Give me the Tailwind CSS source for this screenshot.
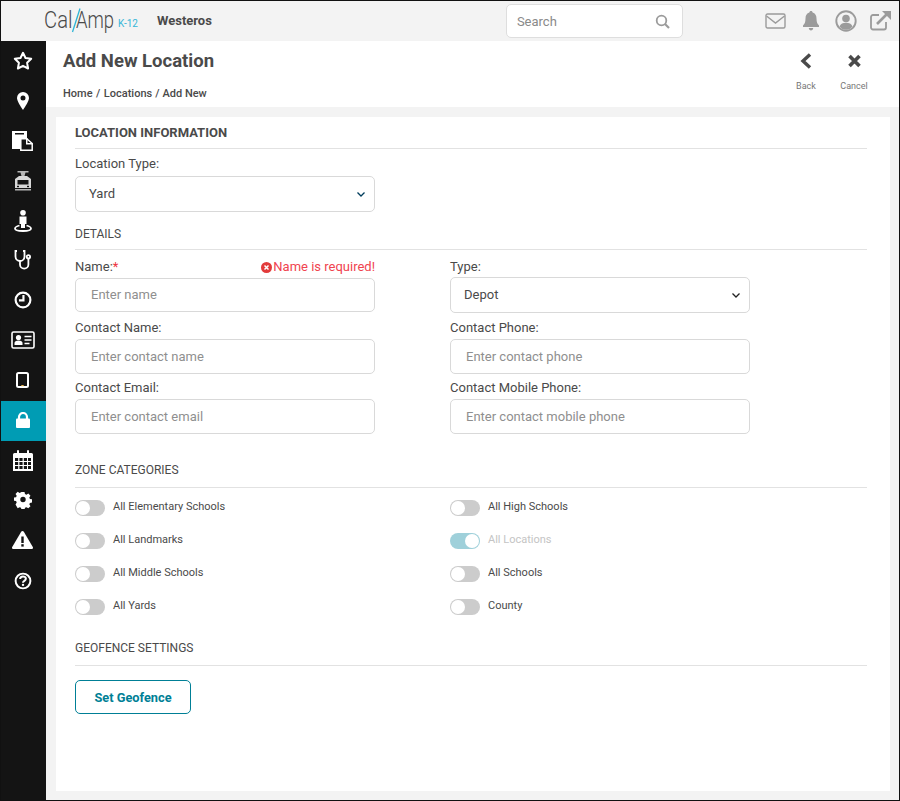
<!DOCTYPE html>
<html lang="en">
<head>
    <meta charset="UTF-8">
    <title>Add New Location</title>
    <script src="https://cdn.jsdelivr.net/npm/@tailwindcss/browser@4"></script>
</head>
<body class="bg-white font-['Roboto',sans-serif] text-[#4a4a4a]">
<div class="w-[900px] h-[801px] border border-[#111] flex flex-col overflow-hidden">

    <!-- top bar -->
    <header class="h-[40px] shrink-0 bg-[#f3f3f3] flex items-center">
        <div class="relative w-[156px] h-[40px] shrink-0">
            <span class="absolute left-[43px] top-[4px] text-[23px] leading-[32px] font-light text-[#4a4a4a] origin-left scale-x-[0.88]">Cal</span>
            <svg class="absolute left-[69px] top-[6px]" width="12" height="26" viewBox="0 0 12 26"><path d="M10 1.500 2.500 25" stroke="#2db4d6" stroke-width="1.300" fill="none"/></svg>
            <span class="absolute left-[75px] top-[4px] text-[23px] leading-[32px] font-light text-[#4a4a4a] origin-left scale-x-[0.8]">Amp</span>
            <span class="absolute left-[117px] top-[17px] text-[10px] leading-[12px] text-[#35b6d8]">K-12</span>
        </div>
        <span class="text-[13px] font-bold text-[#4a4a4a]">Westeros</span>
        <div class="ml-[294px] w-[177px] h-[34px] bg-white border border-[#dedede] rounded-[5px] flex items-center justify-between pl-[10px] pr-[12px] pt-px shrink-0">
            <span class="text-[13px] text-[#8a8a8a]">Search</span>
            <svg width="15" height="15" viewBox="0 0 15 15" fill="none" stroke="#9b9b9b" stroke-width="1.800"><circle cx="6.500" cy="6.500" r="4.800"/><path d="M10 10l4 4" stroke-width="2.200"/></svg>
        </div>
        <div class="ml-[82px] flex items-center text-[#9b9b9b]">
            <svg width="21" height="16" viewBox="0 0 21 16" fill="none" stroke="#9b9b9b" stroke-width="1.400"><rect x="1" y="1" width="19" height="14" rx="1.500"/><path d="M1.500 3l9 7 9-7"/></svg>
            <svg class="ml-[15px]" width="20" height="20" viewBox="0 0 20 20" fill="#9b9b9b"><path d="M10 0c1 0 1.600.7 1.600 1.600C14.300 2.300 15.500 4.600 15.500 7.500c0 4 1 5.500 2.500 7v1.500H2v-1.500c1.500-1.500 2.500-3 2.500-7 0-2.900 1.200-5.200 3.900-5.900C8.400.7 9 0 10 0zM7.800 17h4.400c0 1.500-1 2.500-2.200 2.500S7.800 18.500 7.800 17z"/></svg>
            <svg class="ml-[14px]" width="22" height="22" viewBox="0 0 22 22"><circle cx="11" cy="11" r="9.700" fill="none" stroke="#9b9b9b" stroke-width="1.900"/><circle cx="11" cy="8.500" r="3.800" fill="#9b9b9b"/><path d="M4.500 16.500c1-3 3.500-3.800 6.500-3.800s5.500.8 6.500 3.800c-1.500 2-3.800 3.300-6.500 3.300s-5-1.300-6.500-3.300z" fill="#9b9b9b"/></svg>
            <svg class="ml-[13px]" width="21" height="20" viewBox="0 0 21 20" fill="none"><path d="M16 11v5.500a2 2 0 0 1-2 2H3a2 2 0 0 1-2-2V6a2 2 0 0 1 2-2h6" stroke="#9b9b9b" stroke-width="1.800"/><path d="M7 13 17 3" stroke="#9b9b9b" stroke-width="2.600"/><path d="M12 0h9v9z" fill="#9b9b9b"/></svg>
        </div>
    </header>

    <div class="flex flex-1 min-h-0">
        <!-- sidebar -->
        <nav class="w-[45px] shrink-0 bg-[#141414] flex flex-col">
            <a class="h-[40px] pb-[2px] pr-[2px] flex items-center justify-center"><svg width="20" height="19" viewBox="0 0 20 19" fill="none" stroke="#fff" stroke-width="2" stroke-linejoin="round"><path d="M10 1.800l2.500 5.200 5.700.8-4.100 4 1 5.700-5.100-2.700-5.100 2.700 1-5.700-4.100-4 5.700-.8z"/></svg></a>
            <a class="h-[40px] pr-[2px] flex items-center justify-center"><svg width="12" height="18" viewBox="0 0 12 18"><path fill="#fff" fill-rule="evenodd" d="M6 0a6 6 0 0 1 6 6c0 2.500-3.500 8.500-6 12C3.500 14.500 0 8.500 0 6a6 6 0 0 1 6-6zm0 3.500a2.500 2.500 0 1 0 0 5 2.500 2.500 0 0 0 0-5z"/></svg></a>
            <a class="h-[40px] pr-[2px] flex items-center justify-center"><svg width="21" height="20" viewBox="0 0 21 20"><path fill="#fff" d="M0 0h15v18H0z"/><rect x="3" y="2" width="9" height="1.500" fill="#141414"/><path fill="#141414" stroke="#fff" stroke-width="1.500" d="M8.800 7.800h6l5.400 4.700v6.700H8.800z"/><path fill="#fff" d="M14 7h1.500v5h5v1.500H14z"/></svg></a>
            <a class="h-[40px] pr-[2px] flex items-center justify-center"><svg width="18" height="20" viewBox="0 0 18 20"><path fill="#b5b5b5" d="M3.500 0h11v1.500h-3L10.500 5h-3l-1-3.500h-3z"/><path fill="#d8d8d8" d="M5 5h8l4 3v9H1V8z"/><rect x="3.500" y="9" width="11" height="4.500" fill="#141414"/><rect x="1" y="18" width="16" height="1.500" fill="#b5b5b5"/><rect x="3" y="14.800" width="2" height="1.400" fill="#141414"/><rect x="13" y="14.800" width="2" height="1.400" fill="#141414"/></svg></a>
            <a class="h-[40px] pr-[2px] flex items-center justify-center"><svg width="18" height="22" viewBox="0 0 18 22"><circle cx="9" cy="2.800" r="2.800" fill="#fff"/><path fill="#fff" d="M5.500 6.500h7v7.500H11V18H7v-4H5.500z"/><path fill="none" stroke="#fff" stroke-width="1.800" d="M5.500 15.500C2.800 16.200 1 17.300 1 18.500 1 20 4.600 21 9 21s8-1 8-2.500c0-1.200-1.800-2.300-4.500-3"/></svg></a>
            <a class="h-[40px] pb-[2px] pr-[2px] flex items-center justify-center"><svg width="17" height="20" viewBox="0 0 17 20" fill="none" stroke="#fff" stroke-width="1.800"><path d="M3 1H1.500v5.500a4.500 4.500 0 0 0 9 0V1H9"/><path d="M6 11v3.500a4.200 4.200 0 0 0 8.400 0V9"/><circle cx="14.400" cy="6.800" r="1.700"/></svg></a>
            <a class="h-[40px] pb-[2px] pr-[2px] flex items-center justify-center"><svg width="18" height="18" viewBox="0 0 20 20" fill="none" stroke="#fff"><circle cx="10" cy="10" r="8.200" stroke-width="2.400"/><path d="M10.500 4.500v6H5.500" stroke-width="2.400"/></svg></a>
            <a class="h-[40px] pb-[2px] pr-[1px] flex items-center justify-center"><svg width="24" height="18" viewBox="0 0 24 18"><rect x="1" y="1" width="22" height="16" rx="1.500" fill="#141414" stroke="#fff" stroke-width="1.600"/><circle cx="7.500" cy="6.500" r="2.600" fill="#fff"/><path fill="#fff" d="M3.500 14v-2c0-1.500 1.500-2.500 4-2.500s4 1 4 2.500v2z"/><path stroke="#fff" stroke-width="1.300" d="M13.500 5.500h7M13.500 9h7M13.500 12.500h5"/></svg></a>
            <a class="h-[40px] pb-[2px] pr-[2px] flex items-center justify-center"><svg width="13" height="16" viewBox="0 0 13 16"><rect x="1" y="1" width="11" height="14" rx="1.500" fill="#141414" stroke="#fff" stroke-width="2"/><rect x="5.300" y="13" width="2.400" height="1.200" fill="#e9b44c"/></svg></a>
            <a class="h-[40px] pb-[2px] pr-[2px] flex items-center justify-center bg-[#009cb4]"><svg width="14" height="16" viewBox="0 0 14 16"><path fill="none" stroke="#fff" stroke-width="2.200" d="M3 7V5a4 4 0 0 1 8 0v2"/><rect y="6.500" width="14" height="9.500" rx="1" fill="#fff"/></svg></a>
            <a class="h-[40px] pb-[2px] pr-[2px] flex items-center justify-center"><svg width="20" height="21" viewBox="0 0 20 21"><path fill="#fff" d="M1.500 3H4V1a1 1 0 0 1 2 0v2h8V1a1 1 0 0 1 2 0v2h2.500A1.500 1.500 0 0 1 20 4.500V21H0V4.500A1.500 1.500 0 0 1 1.500 3z"/><path fill="#141414" d="M2 8h3.200v3H2zM6.400 8h3.200v3H6.400zM10.800 8H14v3h-3.200zM15 8h3v3h-3zM2 12h3.200v3H2zM6.400 12h3.200v3H6.400zM10.800 12H14v3h-3.200zM15 12h3v3h-3zM2 16h3.200v3H2zM6.400 16h3.200v3H6.400zM10.800 16H14v3h-3.200zM15 16h3v3h-3z"/></svg></a>
            <a class="h-[40px] pb-[2px] pr-[2px] flex items-center justify-center"><svg width="18" height="18" viewBox="0 0 18 18"><path fill="#fff" fill-rule="evenodd" d="M7.300 0h3.400l.5 2.400 1.600.7 2.100-1.300 2.400 2.400-1.300 2.100.7 1.600 2.300.4v3.400l-2.300.5-.7 1.600 1.300 2.100-2.400 2.400-2.100-1.300-1.600.7-.5 2.300H7.300l-.5-2.300-1.600-.7-2.100 1.300L.7 13.900 2 11.800l-.7-1.600L-1 9.700V6.300L1.300 5.900 2 4.300.7 2.200 3.100-.2l2.100 1.300 1.600-.7zM9 5.500a3 3 0 1 0 0 6 3 3 0 0 0 0-6z" transform="translate(.9 .9) scale(.9)"/></svg></a>
            <a class="h-[40px] pb-[2px] pr-[2px] flex items-center justify-center"><svg width="21" height="18" viewBox="0 0 21 18"><path fill="#fff" d="M10.500 0c.6 0 1 .3 1.300.8l9 15.200c.5 1-.1 2-1.300 2H1.500C.3 18-.3 17 .2 16L9.200.8c.3-.5.700-.8 1.300-.8z"/><rect x="9.300" y="5.500" width="2.400" height="6.500" fill="#141414"/><rect x="9.300" y="13.200" width="2.400" height="2.400" fill="#141414"/></svg></a>
            <a class="h-[40px] pr-[2px] flex items-center justify-center"><svg width="18" height="18" viewBox="0 0 20 20" fill="none" stroke="#fff"><circle cx="10" cy="10" r="8.200" stroke-width="2.200"/><path d="M6.800 7.800C6.800 6 8.200 5 10 5s3.200 1 3.200 2.600c0 2.300-3.200 2.300-3.200 4.400" stroke-width="2.200"/><path d="M10 13.200v2.200" stroke-width="2.400"/></svg></a>
        </nav>

        <main class="flex-1 min-w-0 bg-[#f3f3f3] flex flex-col">
            <!-- page heading -->
            <div class="h-[66px] shrink-0 bg-white flex justify-between pl-[17px] pr-[30px]">
                <div>
                    <h1 class="mt-[8px] text-[18.500px] leading-[24px] font-bold text-[#4a4a4a]">Add New Location</h1>
                    <p class="mt-[14px] text-[11px] leading-[14px] font-medium text-[#4a4a4a] flex">Home<span class="mx-[3.500px]">/</span>Locations<span class="mx-[3px]">/</span>Add New</p>
                </div>
                <div class="flex mt-[12px] gap-[18px]">
                    <button class="w-[30px] flex flex-col items-center">
                        <svg width="12" height="16" viewBox="0 0 12 16"><path d="M10 1.500 3 8l7 6.500" fill="none" stroke="#4a4a4a" stroke-width="3.400"/></svg>
                        <span class="mt-[11px] text-[9px] leading-[12px] text-[#777]">Back</span>
                    </button>
                    <button class="w-[30px] flex flex-col items-center">
                        <svg width="13" height="16" viewBox="0 0 13 16"><path d="M1.500 3l10 10M11.500 3l-10 10" fill="none" stroke="#4a4a4a" stroke-width="3.600"/></svg>
                        <span class="mt-[11px] text-[9px] leading-[12px] text-[#777]">Cancel</span>
                    </button>
                </div>
            </div>

            <!-- form card -->
            <section class="mt-[10px] ml-[10px] mr-[9px] h-[674px] bg-white pl-[19px] pr-[23px] text-[13px] text-[#4a4a4a]">
                <h2 class="h-[32px] leading-[31px] border-b border-[#e2e2e2] text-[13px] font-bold">LOCATION INFORMATION</h2>
                <label class="block mt-[7px] leading-[16px] text-[13px]">Location Type:</label>
                <div class="mt-[4px] w-[300px] h-[36px] border border-[#d9d9d9] rounded-[5px] flex items-center justify-between pl-[13px] pr-[9px]">
                    <span>Yard</span>
                    <svg width="8" height="5" viewBox="0 0 8 5" fill="none" stroke="#003d5c" stroke-width="1.300"><path d="M.5.5 4 4 7.500.5"/></svg>
                </div>

                <h3 class="mt-[14px] h-[24px] leading-[16px] border-b border-[#e2e2e2] text-[12px]">DETAILS</h3>
                <div class="grid grid-cols-[300px_300px] gap-x-[75px] mt-[9px]">
                    <div class="h-[61px]">
                        <div class="flex justify-between leading-[16px]">
                            <span>Name:<span class="text-[#ef3340]">*</span></span>
                            <span class="flex items-center gap-[1px] text-[#f0434f]">
                                <svg width="11" height="11" viewBox="0 0 11 11"><circle cx="5.500" cy="5.500" r="5.500" fill="#e23b3b"/><path d="M3.500 3.500l4 4M7.500 3.500l-4 4" stroke="#fff" stroke-width="1.500"/></svg>
                                Name is required!
                            </span>
                        </div>
                        <div class="mt-[3px] h-[34px] border border-[#d9d9d9] rounded-[5px] pl-[15px] flex items-center text-[#8f8f8f]">Enter name</div>
                    </div>
                    <div class="h-[61px]">
                        <div class="leading-[16px]">Type:</div>
                        <div class="mt-[2px] h-[36px] border border-[#d9d9d9] rounded-[5px] flex items-center justify-between pl-[13px] pr-[9px]">
                            <span>Depot</span>
                            <svg width="8" height="5" viewBox="0 0 8 5" fill="none" stroke="#222" stroke-width="1.300"><path d="M.5.5 4 4 7.500.5"/></svg>
                        </div>
                    </div>
                    <div class="h-[60px]">
                        <div class="leading-[16px]">Contact Name:</div>
                        <div class="mt-[3px] h-[35px] border border-[#d9d9d9] rounded-[5px] pl-[15px] flex items-center text-[#8f8f8f]">Enter contact name</div>
                    </div>
                    <div class="h-[60px]">
                        <div class="leading-[16px]">Contact Phone:</div>
                        <div class="mt-[3px] h-[35px] border border-[#d9d9d9] rounded-[5px] pl-[15px] flex items-center text-[#8f8f8f]">Enter contact phone</div>
                    </div>
                    <div class="h-[60px]">
                        <div class="leading-[16px]">Contact Email:</div>
                        <div class="mt-[3px] h-[35px] border border-[#d9d9d9] rounded-[5px] pl-[15px] flex items-center text-[#8f8f8f]">Enter contact email</div>
                    </div>
                    <div class="h-[60px]">
                        <div class="leading-[16px]">Contact Mobile Phone:</div>
                        <div class="mt-[3px] h-[35px] border border-[#d9d9d9] rounded-[5px] pl-[15px] flex items-center text-[#8f8f8f]">Enter contact mobile phone</div>
                    </div>
                </div>

                <h3 class="mt-[22px] h-[26px] leading-[16px] border-b border-[#e2e2e2] text-[12px]">ZONE CATEGORIES</h3>
                <div class="mt-[11px] grid grid-cols-[300px_300px] gap-x-[75px] text-[11px]">
                    <div class="h-[33px] flex items-start gap-[8px]"><span class="mt-px w-[30px] h-[16px] rounded-full bg-[#cccccc] p-px"><span class="block w-[14px] h-[14px] rounded-full bg-white"></span></span><span class="leading-[16px]">All Elementary Schools</span></div>
                    <div class="h-[33px] flex items-start gap-[8px]"><span class="mt-px w-[30px] h-[16px] rounded-full bg-[#cccccc] p-px"><span class="block w-[14px] h-[14px] rounded-full bg-white"></span></span><span class="leading-[16px]">All High Schools</span></div>
                    <div class="h-[33px] flex items-start gap-[8px]"><span class="mt-px w-[30px] h-[16px] rounded-full bg-[#cccccc] p-px"><span class="block w-[14px] h-[14px] rounded-full bg-white"></span></span><span class="leading-[16px]">All Landmarks</span></div>
                    <div class="h-[33px] flex items-start gap-[8px]"><span class="mt-px w-[30px] h-[16px] rounded-full bg-[#9fd0da] p-px flex justify-end"><span class="block w-[14px] h-[14px] rounded-full bg-white"></span></span><span class="leading-[16px] text-[#c4c4c4]">All Locations</span></div>
                    <div class="h-[33px] flex items-start gap-[8px]"><span class="mt-px w-[30px] h-[16px] rounded-full bg-[#cccccc] p-px"><span class="block w-[14px] h-[14px] rounded-full bg-white"></span></span><span class="leading-[16px]">All Middle Schools</span></div>
                    <div class="h-[33px] flex items-start gap-[8px]"><span class="mt-px w-[30px] h-[16px] rounded-full bg-[#cccccc] p-px"><span class="block w-[14px] h-[14px] rounded-full bg-white"></span></span><span class="leading-[16px]">All Schools</span></div>
                    <div class="h-[33px] flex items-start gap-[8px]"><span class="mt-px w-[30px] h-[16px] rounded-full bg-[#cccccc] p-px"><span class="block w-[14px] h-[14px] rounded-full bg-white"></span></span><span class="leading-[16px]">All Yards</span></div>
                    <div class="h-[33px] flex items-start gap-[8px]"><span class="mt-px w-[30px] h-[16px] rounded-full bg-[#cccccc] p-px"><span class="block w-[14px] h-[14px] rounded-full bg-white"></span></span><span class="leading-[16px]">County</span></div>
                </div>

                <h3 class="mt-[9px] h-[26px] leading-[16px] border-b border-[#e2e2e2] text-[12px]">GEOFENCE SETTINGS</h3>
                <button class="mt-[14px] w-[116px] h-[34px] pt-px border border-[#007f96] rounded-[5px] text-[12.800px] font-bold text-[#007f96]">Set Geofence</button>
            </section>
        </main>
    </div>
</div>
</body>
</html>
